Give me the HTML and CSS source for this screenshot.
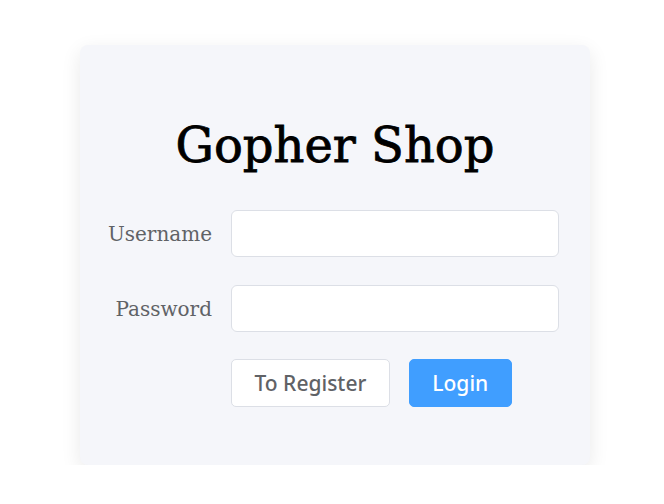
FILE: index.html
```html
<!DOCTYPE html>
<html>
<head>
<meta charset="utf-8">
<link rel="stylesheet" href="styles.css">
</head>
<body>
<div class="page">
  <div class="card">
    <h1 class="title">Gopher Shop</h1>
    <form class="form">
      <div class="row">
        <label class="label">Username</label>
        <input class="input" type="text">
      </div>
      <div class="row">
        <label class="label">Password</label>
        <input class="input" type="password">
      </div>
      <div class="row actions">
        <span class="label"></span>
        <div class="buttons">
          <button type="button" class="btn">To Register</button>
          <button type="button" class="btn primary">Login</button>
        </div>
      </div>
    </form>
  </div>
</div>
</body>
</html>
```
FILE: styles.css
```css
* { box-sizing: border-box; }
html, body { margin: 0; padding: 0; background: #fff; }
.page {
  padding: 45px 0 0 80px;
}
.card {
  width: 510px;
  height: 420px;
  background: #f5f6fa;
  border-radius: 8px;
  box-shadow: 0 6px 20px rgba(0,0,0,0.09);
  padding-top: 70px;
}
.title {
  margin: 0;
  text-align: center;
  font-family: "DejaVu Serif", serif;
  font-weight: normal;
  font-size: 48px;
  line-height: 60px;
  color: #000;
  -webkit-text-stroke: 0.8px #000;
}
.form {
  margin-top: 35px;
  display: flex;
  flex-direction: column;
  gap: 28px;
}
.row {
  display: flex;
  align-items: center;
}
.actions {
  margin-top: -1px;
}
.label {
  width: 132px;
  text-align: right;
  font-family: "DejaVu Serif", serif;
  font-size: 20px;
  color: #606266;
  margin-right: 19px;
}
.input {
  width: 328px;
  height: 47px;
  border: 1px solid #dcdfe6;
  border-radius: 6px;
  background: #fff;
  outline: none;
  padding: 0 15px;
  font-size: 18px;
}
.buttons {
  display: flex;
  gap: 19px;
}
.btn {
  height: 48px;
  padding: 0 22.5px;
  border: 1px solid #dcdfe6;
  border-radius: 5px;
  background: #fff;
  color: #606266;
  font-family: "Noto Sans", sans-serif;
  font-size: 21px;
  font-weight: 500;
  cursor: pointer;
}
.btn.primary {
  background: #409eff;
  border-color: #409eff;
  color: #fff;
}
```
